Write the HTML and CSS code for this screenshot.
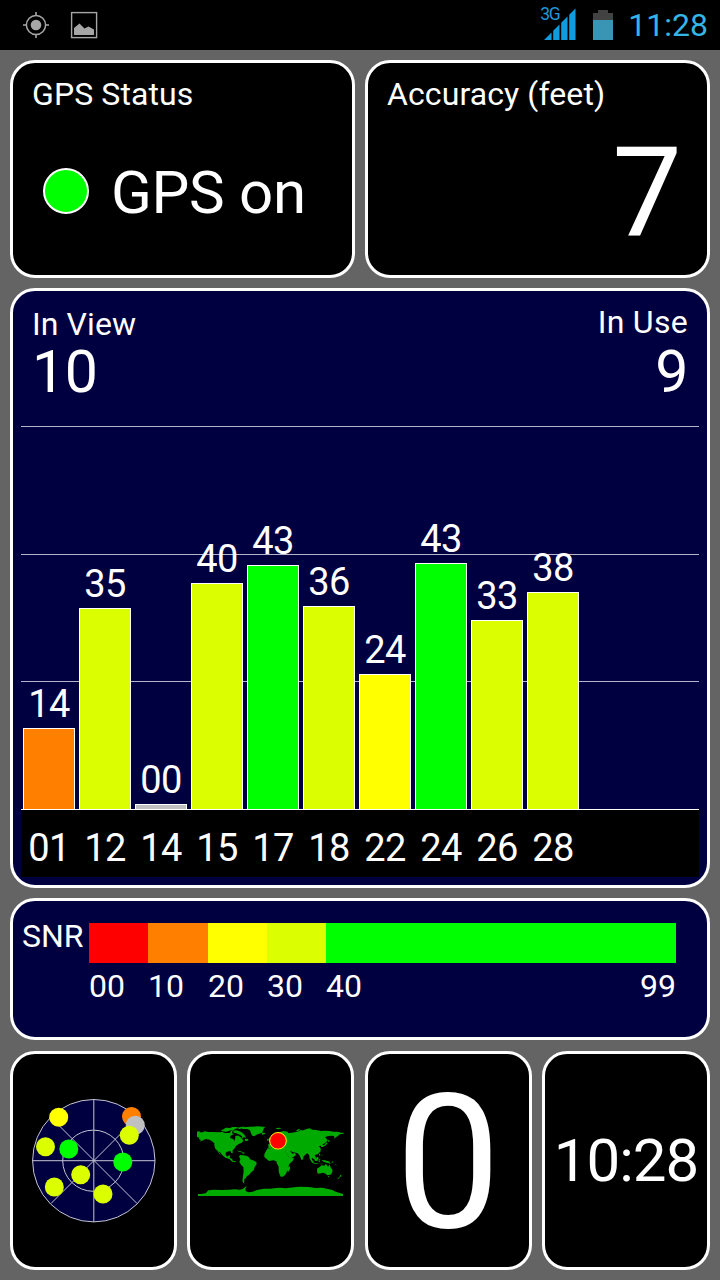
FILE: index.html
```html
<!DOCTYPE html>
<html lang="en">
<head>
  <meta charset="UTF-8" />
  <meta name="viewport" content="width=device-width, initial-scale=1.0"/>
  <title>GPS Test</title>
  <link rel="stylesheet" href="styles.css">
</head>
<body>
  <header class="status-bar">
    <svg class="icon-gps" width="28" height="28" viewBox="0 0 28 28">
      <circle cx="14" cy="14" r="9.6" fill="none" stroke="#a6a6a6" stroke-width="1.5"/>
      <circle cx="14" cy="14" r="5.3" fill="#a6a6a6"/>
      <path d="M14 1v4M14 23v4M1 14h4M23 14h4" stroke="#a6a6a6" stroke-width="1.6"/>
    </svg>
    <svg class="icon-image" width="28" height="28" viewBox="0 0 28 28">
      <rect x="1.6" y="1.6" width="25" height="25" fill="none" stroke="#a6a6a6" stroke-width="1.4"/>
      <path d="M4 24v-7l5.500-4.500 5 5 4-2 5.500 3v5.500z" fill="#a6a6a6"/>
    </svg>
    <div class="signal">
      <span class="network">3G</span>
      <svg width="32" height="32" viewBox="0 0 32 32">
        <path d="M0 32L7.500 24.500V32zM9.200 22.800L15.500 16.500V32H9.200zM17.200 14.800L23.500 8.500V32H17.200zM25.200 6.800L31.500 .5V32H25.200z" fill="#0f9be0"/>
      </svg>
    </div>
    <svg class="icon-battery" width="20" height="32" viewBox="0 0 20 32">
      <path d="M5 1h10v3h5v8H0V4h5z" fill="#424242"/>
      <rect y="11" width="20" height="20" fill="#3a95b5"/>
    </svg>
    <span class="clock">11:28</span>
  </header>

  <main class="dashboard">
    <section class="row top-row">
      <div class="card">
        <h2>GPS Status</h2>
        <div class="gps-state">
          <span class="led"></span>
          <span class="state-text">GPS on</span>
        </div>
      </div>
      <div class="card">
        <h2>Accuracy (feet)</h2>
        <div class="accuracy">7</div>
      </div>
    </section>

    <section class="card blue satellites">
      <div class="counts">
        <div class="in-view">
          <h2>In View</h2>
          <span>10</span>
        </div>
        <div class="in-use">
          <h2>In Use</h2>
          <span>9</span>
        </div>
      </div>
      <div class="chart">
        <div class="column"><span>14</span><div class="bar orange" style="height: 81px"></div></div>
        <div class="column"><span>35</span><div class="bar lime" style="height: 201px"></div></div>
        <div class="column"><span>00</span><div class="bar gray" style="height: 5px"></div></div>
        <div class="column"><span>40</span><div class="bar lime" style="height: 226px"></div></div>
        <div class="column"><span>43</span><div class="bar green" style="height: 244px"></div></div>
        <div class="column"><span>36</span><div class="bar lime" style="height: 203px"></div></div>
        <div class="column"><span>24</span><div class="bar yellow" style="height: 135px"></div></div>
        <div class="column"><span>43</span><div class="bar green" style="height: 246px"></div></div>
        <div class="column"><span>33</span><div class="bar lime" style="height: 189px"></div></div>
        <div class="column"><span>38</span><div class="bar lime" style="height: 217px"></div></div>
      </div>
      <div class="labels">
        <span>01</span>
        <span>12</span>
        <span>14</span>
        <span>15</span>
        <span>17</span>
        <span>18</span>
        <span>22</span>
        <span>24</span>
        <span>26</span>
        <span>28</span>
      </div>
    </section>

    <section class="card blue snr">
      <span class="snr-title">SNR</span>
      <div class="scale">
        <div class="red"></div>
        <div class="orange"></div>
        <div class="yellow"></div>
        <div class="lime"></div>
        <div class="green"></div>
        <span>00</span>
        <span>10</span>
        <span>20</span>
        <span>30</span>
        <span class="ends"><span>40</span><span>99</span></span>
      </div>
    </section>

    <section class="row bottom-row">
      <div class="card tile">
        <svg width="126" height="126" viewBox="31 1098 126 126">
          <circle cx="93.800" cy="1160.700" r="61.200" fill="#000040" stroke="#c4c4d4"/>
          <g fill="none" stroke="#c4c4d4">
            <circle cx="93.300" cy="1160.700" r="30.600"/>
            <path d="M93.800 1099v123M32 1160.700h123M51 1117.500l86 86M137 1117.500l-86 86"/>
          </g>
          <circle cx="131.500" cy="1116.500" r="9.500" fill="#ff8000"/>
          <circle cx="135.300" cy="1125.300" r="9.500" fill="#c0c0c0"/>
          <circle cx="129.300" cy="1135.300" r="9.500" fill="#dcff00"/>
          <circle cx="58.700" cy="1117.300" r="9.500" fill="#ffff00"/>
          <circle cx="45.500" cy="1146.700" r="9.500" fill="#dcff00"/>
          <circle cx="68.800" cy="1149" r="9.500" fill="#00ff00"/>
          <circle cx="122.800" cy="1162" r="9.500" fill="#00ff00"/>
          <circle cx="80.700" cy="1174.700" r="9.500" fill="#dcff00"/>
          <circle cx="54.300" cy="1187" r="9.500" fill="#dcff00"/>
          <circle cx="103" cy="1194" r="9.500" fill="#dcff00"/>
        </svg>
      </div>
      <div class="card tile">
        <!-- world map -->
        <svg width="148" height="74" viewBox="36 42 444 222">
          <g fill="#00aa00">
            <path d="M38 64h6v3h10l4-3 12 2 14 0 16 1 12-1 8 3h14l4-6h5l-2 7 6 2-10 5-2 7 10 3 3 7 3-10v-7l10 0 6 5 5 6 3 5-5 5-9 4-8 6-4 7-6 6v8h-4l-3-6-10 2-4 3v7l5 5 5-4 4 1-2 7 7 2 3 7 9 1-2 3-9-2-9-8-12-4-10-9-7-9-2 1 5 9-3-2-6-10-7-7-3-9v-7l-7-6-7-5-12-2-8 4-10 4 4-5-7-3 3-4-8-2v-2l-8-1z"/>
            <path d="M108 61l10-4 12 1 4 4-10 3-13-1zM116 57l7-4 12 1 8-3 12 0 5 3-10 3-6 5-13-1zM145 62l7-1 8 1 10 5 9 8 4 8-7-1-5 4 1-6-7-6-11-4-8-2zM158 53l12-3 10 0-9 5-9 3zM166 55l10-3 18-2 26-1 22 2-5 3-3 8-2 6-10 3-8 3-6 5-6-2-4-7-3-9-8-4-12 0z"/>
            <path d="M229 70l8-2 5 2-4 3-6 1zM179 87l9-1 3 5-5 2-6-1zM155 122l10 1 9 4-6 0-10-3zM172 127l8 1-3 3-6-1z"/>
            <path d="M162 139l5-4 9 1 10 2 6 4 3 6 9 3 10 5 1 6-6 9-4 11-6 4-7 9-7 4-2 5-5 3 0 7-1 4 5 2-7-1-3-7 2-13 2-16-1-12-7-7-5-8 3-8z"/>
            <path d="M246 116l5-5-2-8 8-1 3-4-5-4 10-8 7-3 4-7 5-4 4-6 11-3 12 2 1 4 12-1 12-2 8-2 4-3 11 0 9-4 9-2 8 4 12 1 13 3 13-1 12 1 13 2 13 0 10 3h8v3l-12 2-5 5-7 4-3 5-2-9-9-1-11 2-8 3 6 4 2 6-9 9-5 1 2 8-5 2-3-5-6 2 6 5 0 10-9 9-9 2 4 8-4 6-8-6-1 6 5 9-4 0-6-13-3-11-6-4-10 9-3 10-3 2-7-16-6-6-12-2-10-5 7 9 8-2 3 6-8 6-10 5-11-17-3-7-12-3-6-3 0 3-8-1-3-4-11-1-8 1z"/>
            <path d="M247 116l14-3 9 0 3 4 7 3 7-3 12 2 6 10 6 12 6 4 10-2-4 10-11 10-1 8 2 6-7 7-4 9-6 6-8 2-4-7-3-11 0-13-5-9-2-7-9-3-13 2-8-7-6-5 0-8 5-10z"/>
            <path d="M308 177l4-6 3-4 0 9-4 9-3-1zM250 89l3-6 4 1 3 8-8 2zM246 88l4-2 0 5-4 1zM423 97l5 2-5 7-10 4-2-3 10-4zM428 89l8 4-7 3zM333 63l6-5 7-2-7 8zM270 55l12-2 8 2-10 3zM352 133l4 3-2 3zM398 118l4 6-1 4zM401 129l6 7-4 1zM410 132l3 5-2 1z"/>
            <path d="M371 141l6 3 7 9 4 5-4 0-7-7zM389 147l9-7 3 4-4 9-8-1zM401 148l7-1-5 3 2 7-4-2zM385 159l12 1 4 2-14-1zM402 161l12 0-4 2zM411 150l8 1 12 3 7 7-10-2-8-2-8-4zM438 156l7-2-2 4zM450 162l6 4-3 0z"/>
            <path d="M396 176l8-5 6-5 8 1 3-4 5 1 1 5 4 0 2-6 4 9 5 7 0 8-5 7-10 2-5-5-8-3-13 3-4-1zM428 198l5 0-2 4zM466 194l5 4-6 3-4 5-4 0 7-6z"/>
            <path d="M39 252h9l14-2 8-9 16-2 24 1 22-1 18-1 14 1 10-2 6-6 6-2-5 6 1 8 8 4 13-2 13-5 21-4 18 0 19-2 14-1 14 2 12-2 15-1 14-2 28 1 21 3 20-1 17 4 13 3 10 5L474 252V258H39z"/>
          </g>
          <circle cx="279" cy="92.500" r="25" fill="#ff0000" stroke="#ffff00" stroke-width="3"/>
        </svg>
      </div>
      <div class="card tile speed">0</div>
      <div class="card tile time">10:28</div>
    </section>
  </main>
</body>
</html>
```
FILE: styles.css
```css
* {
  box-sizing: border-box;
}

body {
  font-family: Roboto, sans-serif;
  font-size: 32px;
  background-color: #646464;
  color: #ffffff;
  margin: 0;
  width: 720px;
  height: 1280px;
  overflow: hidden;
}

/* status bar */
.status-bar {
  height: 50px;
  background: #000000;
  padding: 0 12px 0 22px;
  display: flex;
  align-items: center;
  line-height: 50px;
}

.icon-image {
  margin-left: 20px;
}

.signal {
  position: relative;
  display: flex;
  margin: -3px 17px 0 auto;
}

.network {
  position: absolute;
  left: -4px;
  top: -3px;
  font-size: 17.5px;
  line-height: 18px;
  letter-spacing: -1.5px;
  color: #2196d8;
}

.icon-battery {
  margin-right: 15px;
}

.clock {
  color: #33b5e5;
  font-size: 32px;
}

/* cards */
.dashboard {
  padding: 10px;
  display: flex;
  flex-direction: column;
  gap: 10px;
}

.row {
  display: grid;
  gap: 10px;
}

.card {
  background: #000000;
  border: 3px solid #ffffff;
  border-radius: 25px;
}

.blue {
  background: #000040;
}

h2 {
  margin: 0;
  font-size: 32px;
  font-weight: 400;
  line-height: 38px;
  letter-spacing: 0.1px;
}

.top-row {
  grid-template-columns: 345px 345px;
  height: 218px;
}

.top-row .card {
  padding: 12px 19px;
}

.gps-state {
  display: flex;
  align-items: center;
  gap: 22px;
  margin: 43px 0 0 11px;
  font-size: 60px;
  line-height: 70px;
}

.state-text {
  padding-top: 2px;
  margin-bottom: -2px;
  letter-spacing: -0.3px;
}

.led {
  width: 46px;
  height: 46px;
  border: 2px solid #ffffff;
  border-radius: 50%;
  background: #00ff00;
}

.accuracy {
  font-size: 124px;
  line-height: 130px;
  text-align: right;
  margin: 15px 6px 0 0;
}

/* satellite chart */
.satellites {
  height: 600px;
  padding: 0 8px;
}

.counts {
  display: flex;
  justify-content: space-between;
  height: 135px;
  padding: 14px 11px 0;
}

.counts span {
  display: block;
  font-size: 59px;
  line-height: 58px;
  letter-spacing: -0.5px;
}

.in-use {
  margin-top: -2px;
  text-align: right;
}

.in-use h2 {
  letter-spacing: 0.3px;
}

.in-use span {
  margin-top: 2px;
}

.chart {
  display: flex;
  align-items: flex-end;
  gap: 4px;
  height: 384px;
  padding-left: 2px;
  border-bottom: 1px solid #ffffff;
  background:
    linear-gradient(#b4b4cc, #b4b4cc) 0 0 / 100% 1px no-repeat,
    linear-gradient(#b4b4cc, #b4b4cc) 0 128px / 100% 1px no-repeat,
    linear-gradient(#b4b4cc, #b4b4cc) 0 255px / 100% 1px no-repeat;
}

.column {
  width: 52px;
  font-size: 38px;
  line-height: 48px;
  letter-spacing: -0.5px;
  text-align: center;
}

.bar {
  border: 1px solid #ffffff;
  border-bottom: 0;
}

.red { background: #ff0000; }
.orange { background: #ff8000; }
.yellow { background: #ffff00; }
.lime { background: #dcff00; }
.green { background: #00ff00; }
.gray { background: #c0c0c0; }

.labels {
  display: flex;
  gap: 4px;
  height: 67px;
  padding: 6px 0 0 2px;
  background: #000000;
  font-size: 38px;
  line-height: 64px;
  letter-spacing: -0.5px;
}

.labels span {
  width: 52px;
  text-align: center;
}

/* snr scale */
.snr {
  height: 142px;
  padding: 22px 8px;
  display: flex;
}

.snr-title {
  width: 68px;
  padding-left: 1px;
  line-height: 26px;
}

.scale {
  display: grid;
  grid-template-columns: 59px 60px 59px 59px 350px;
  grid-template-rows: 40px 46px;
  line-height: 46px;
}

.ends {
  display: flex;
  justify-content: space-between;
}

/* bottom tiles */
.bottom-row {
  grid-template-columns: 167px 167px 167px 168px;
  grid-template-rows: 219px;
  gap: 0;
  justify-content: space-between;
  margin-top: 1px;
}

.tile {
  display: flex;
  align-items: center;
  justify-content: center;
  line-height: 1;
}

.speed {
  font-size: 188px;
  padding-top: 4px;
}

.time {
  font-size: 60px;
  letter-spacing: -1px;
}
```
